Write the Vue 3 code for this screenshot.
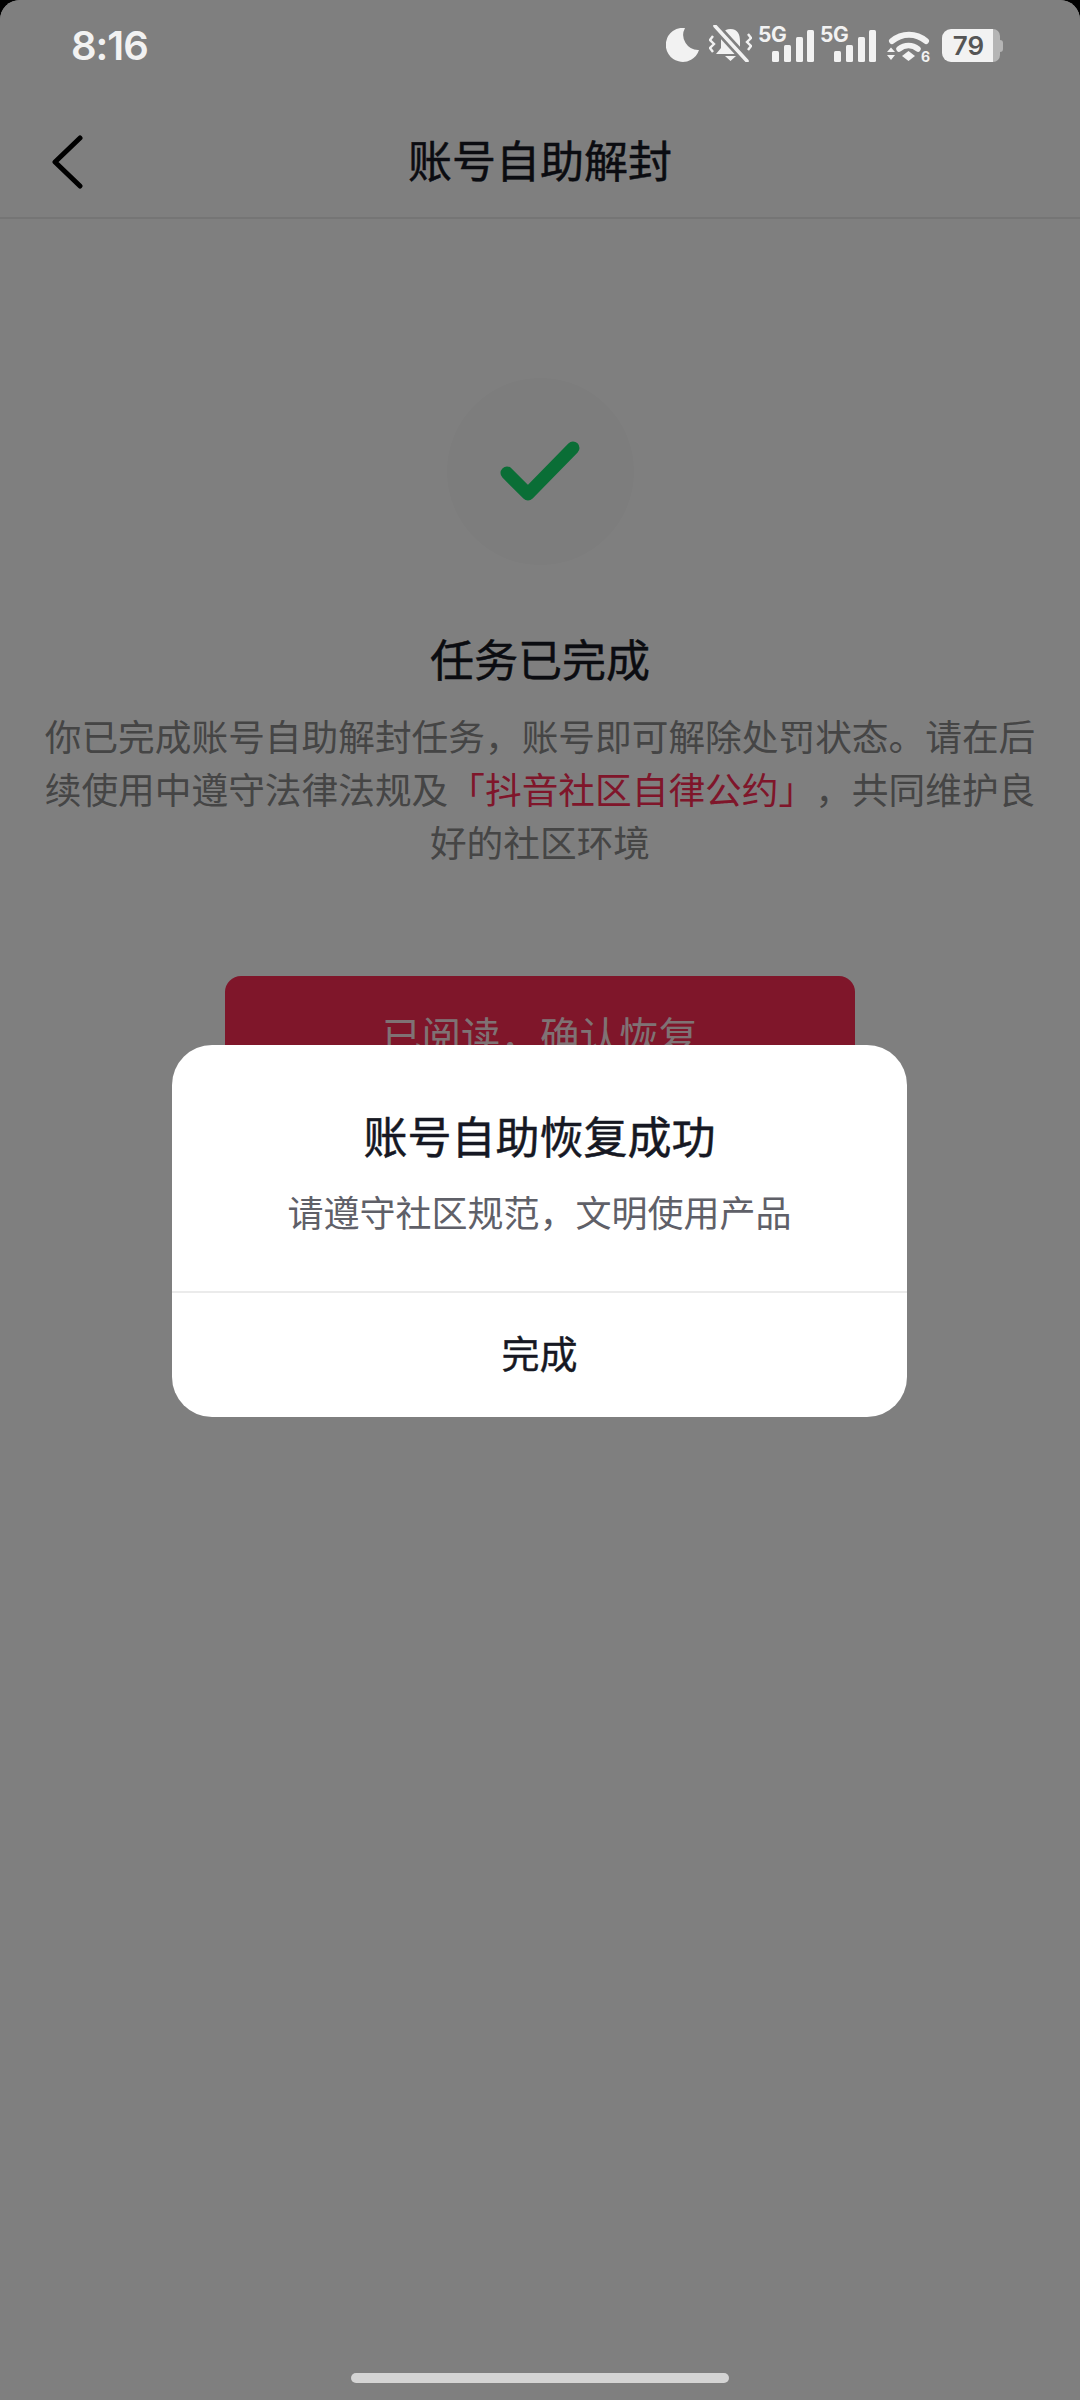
<script setup>
const signals = [0, 1]
</script>

<template>
  <div class="screen">
    <div class="page">
      <div class="nav">
        <svg class="back" width="36" height="54" viewBox="0 0 36 54">
          <path d="M30 3 L5 27 L30 51" fill="none" stroke="#000" stroke-width="5" stroke-linecap="round" stroke-linejoin="round" />
        </svg>
        <div class="nav-title">账号自助解封</div>
      </div>
      <div class="content">
        <div class="circle">
          <svg width="90" height="70" viewBox="0 0 90 70">
            <path d="M12 36 L33 57 L78 11" fill="none" stroke="#15dc6c" stroke-width="13" stroke-linecap="round" stroke-linejoin="round" />
          </svg>
        </div>
        <div class="done">任务已完成</div>
        <p class="desc">你已完成账号自助解封任务，账号即可解除处罚状态。请在后续使用中遵守法律法规及<span class="link">「抖音社区自律公约」</span>，共同维护良好的社区环境</p>
        <div class="confirm">已阅读，确认恢复</div>
      </div>
    </div>

    <div class="scrim">
      <div class="dialog">
        <div class="dialog-body">
          <div class="dialog-title">账号自助恢复成功</div>
          <div class="dialog-sub">请遵守社区规范，文明使用产品</div>
        </div>
        <div class="dialog-action">完成</div>
      </div>
    </div>

    <div class="status">
      <span class="time">8:16</span>
      <div class="icons">
        <svg class="moon" width="33" height="34" viewBox="0 0 33 34"><path d="M19 0 A17 17 0 1 0 33 22 A15 15 0 0 1 19 0 Z" fill="#f2f2f2" /></svg>
        <svg class="bell" width="43" height="37" viewBox="0 0 43 37">
          <path d="M21.5 4 C14 4 12 10 12 16 L12 23 L7 29 L36 29 L31 23 L31 16 C31 10 29 4 21.5 4 Z M16 31 L27 31 L21.5 36 Z" fill="#f2f2f2" />
          <path d="M6 1 L38 36" stroke="#808080" stroke-width="9" />
          <path d="M6 1 L38 36" stroke="#f2f2f2" stroke-width="3.6" stroke-linecap="round" />
          <path d="M4 11 L1 15 L5 19 L1 23 L4 27 M39 9 L42 13 L38 17 L42 21 L39 25" fill="none" stroke="#f2f2f2" stroke-width="2.4" />
        </svg>
        <div v-for="s in signals" :key="s" class="signal">
          <span class="five-g">5G</span>
          <span class="bar b1"></span>
          <span class="bar b2"></span>
          <span class="bar b3"></span>
          <span class="bar b4"></span>
        </div>
        <svg class="wifi" width="46" height="37" viewBox="0 0 46 37">
          <path d="M5 12 A26 26 0 0 1 39 12" fill="none" stroke="#f2f2f2" stroke-width="6" stroke-linecap="round" />
          <path d="M12 20 A15 15 0 0 1 31 20" fill="none" stroke="#f2f2f2" stroke-width="5.5" stroke-linecap="round" />
          <path d="M15 27 L21.5 22 L28 27 L21.5 32 Z" fill="#f2f2f2" />
          <path d="M0 23 L4 18.5 L8 23 Z M0 26 L8 26 L4 31 Z" fill="#f2f2f2" />
          <text x="34" y="32.5" class="wifi6">6</text>
        </svg>
        <div class="battery">
          <div class="batt-body"><span>79</span></div>
          <div class="batt-rest"></div>
          <div class="batt-nub"></div>
        </div>
      </div>
    </div>

    <div class="home"></div>
  </div>
</template>

<style scoped>
.screen {
  position: relative;
  width: 1080px;
  height: 2400px;
  overflow: hidden;
  background: #000;
  font-family: "Noto Sans CJK SC", "Noto Sans", sans-serif;
  text-spacing-trim: space-all;
}
.page {
  height: 100%;
  background: #fff;
  border-radius: 20px 20px 0 0;
  padding-top: 100px;
  box-sizing: border-box;
}
.nav {
  position: relative;
  height: 117px;
  display: flex;
  align-items: center;
  justify-content: center;
  border-bottom: 2px solid #ebebeb;
}
.back {
  position: absolute;
  left: 50px;
  top: 35px;
}
.nav-title {
  font-size: 44px;
  font-weight: 400;
  -webkit-text-stroke: 0.5px #161823;
  color: #161823;
}
.content {
  display: flex;
  flex-direction: column;
  align-items: center;
}
.circle {
  width: 187px;
  height: 187px;
  margin-top: 159px;
  border-radius: 50%;
  background: #fafafa;
  display: flex;
  align-items: center;
  justify-content: center;
}
.done {
  margin-top: 63px;
  font-size: 44px;
  line-height: 60px;
  font-weight: 400;
  -webkit-text-stroke: 0.5px #161823;
  color: #161823;
}
.desc {
  width: 1000px;
  margin: 21px 0 0;
  font-size: 36.7px;
  line-height: 53px;
  text-align: center;
  color: #8a8a8a;
}
.link {
  color: #fe2c55;
}
.confirm {
  width: 630px;
  height: 114px;
  margin-top: 108px;
  border-radius: 16px;
  background: #fe2c55;
  color: rgba(255, 255, 255, 0.9);
  font-size: 39.5px;
  display: flex;
  align-items: center;
  justify-content: center;
}
.scrim {
  position: absolute;
  inset: 0;
  background: rgba(0, 0, 0, 0.5);
  border-radius: 20px 20px 0 0;
}
.dialog {
  position: absolute;
  left: 172px;
  top: 1045px;
  width: 735px;
  height: 372px;
  border-radius: 40px;
  background: #fff;
  display: flex;
  flex-direction: column;
}
.dialog-body {
  height: 246px;
  border-bottom: 2px solid #ebebeb;
  display: flex;
  flex-direction: column;
  align-items: center;
}
.dialog-title {
  margin-top: 60px;
  font-size: 44px;
  line-height: 60px;
  color: #161823;
  font-weight: 400;
  -webkit-text-stroke: 0.5px #161823;
}
.dialog-sub {
  margin-top: 21px;
  font-size: 36px;
  line-height: 50px;
  color: #5f6068;
}
.dialog-action {
  flex: 1;
  display: flex;
  align-items: center;
  justify-content: center;
  padding-bottom: 8px;
  font-size: 38px;
  font-weight: 400;
  -webkit-text-stroke: 0.4px #161823;
  color: #161823;
}
.status {
  position: absolute;
  left: 0;
  right: 0;
  top: 0;
  height: 90px;
  display: flex;
  align-items: center;
  justify-content: space-between;
  padding: 0 77px 0 71px;
  box-sizing: border-box;
}
.time {
  font-family: "Inter", "Roboto", sans-serif;
  font-size: 40px;
  font-weight: 600;
  letter-spacing: -1px;
  color: #f2f2f2;
}
.icons {
  position: absolute;
  right: 77px;
  top: 25px;
  height: 37px;
  display: flex;
  align-items: flex-end;
}
.bell { margin-left: 10px; }
.signal {
  position: relative;
  width: 55px;
  height: 37px;
  margin-left: 6px;
}
.signal + .signal { margin-left: 7px; }
.wifi {
  margin-left: 12px;
  margin-right: -2px;
  margin-bottom: -4px;
}
.five-g {
  position: absolute;
  left: 0;
  top: 0;
  font-family: "Inter", sans-serif;
  font-size: 21px;
  line-height: 20px;
  font-weight: 700;
  letter-spacing: -0.5px;
  color: #f2f2f2;
}
.bar {
  position: absolute;
  bottom: 0;
  width: 7px;
  border-radius: 1.5px;
  background: #f2f2f2;
}
.b1 { left: 14px; height: 11px; }
.b2 { left: 26px; height: 17px; }
.b3 { left: 38px; height: 25px; }
.b4 { left: 49px; height: 32px; }
.wifi6 {
  font-family: "Inter", sans-serif;
  font-size: 14px;
  font-weight: 700;
  fill: #f2f2f2;
}
.battery {
  display: flex;
  align-items: center;
  margin-left: 11px;
}
.batt-body {
  width: 51px;
  height: 33px;
  border-radius: 9px 0 0 9px;
  background: #f2f2f2;
  display: flex;
  align-items: center;
  justify-content: center;
  padding-left: 2px;
  box-sizing: border-box;
}
.batt-body span {
  font-family: "Inter", sans-serif;
  font-size: 26px;
  line-height: 33px;
  font-weight: 600;
  color: #555;
}
.batt-rest {
  width: 7px;
  height: 33px;
  background: #b5b5b5;
  border-radius: 0 8px 8px 0;
}
.batt-nub {
  width: 3px;
  height: 12px;
  background: #b5b5b5;
  border-radius: 0 3px 3px 0;
}
.home {
  position: absolute;
  left: 351px;
  top: 2373px;
  width: 378px;
  height: 10px;
  border-radius: 5px;
  background: #d4d4d4;
}
</style>
